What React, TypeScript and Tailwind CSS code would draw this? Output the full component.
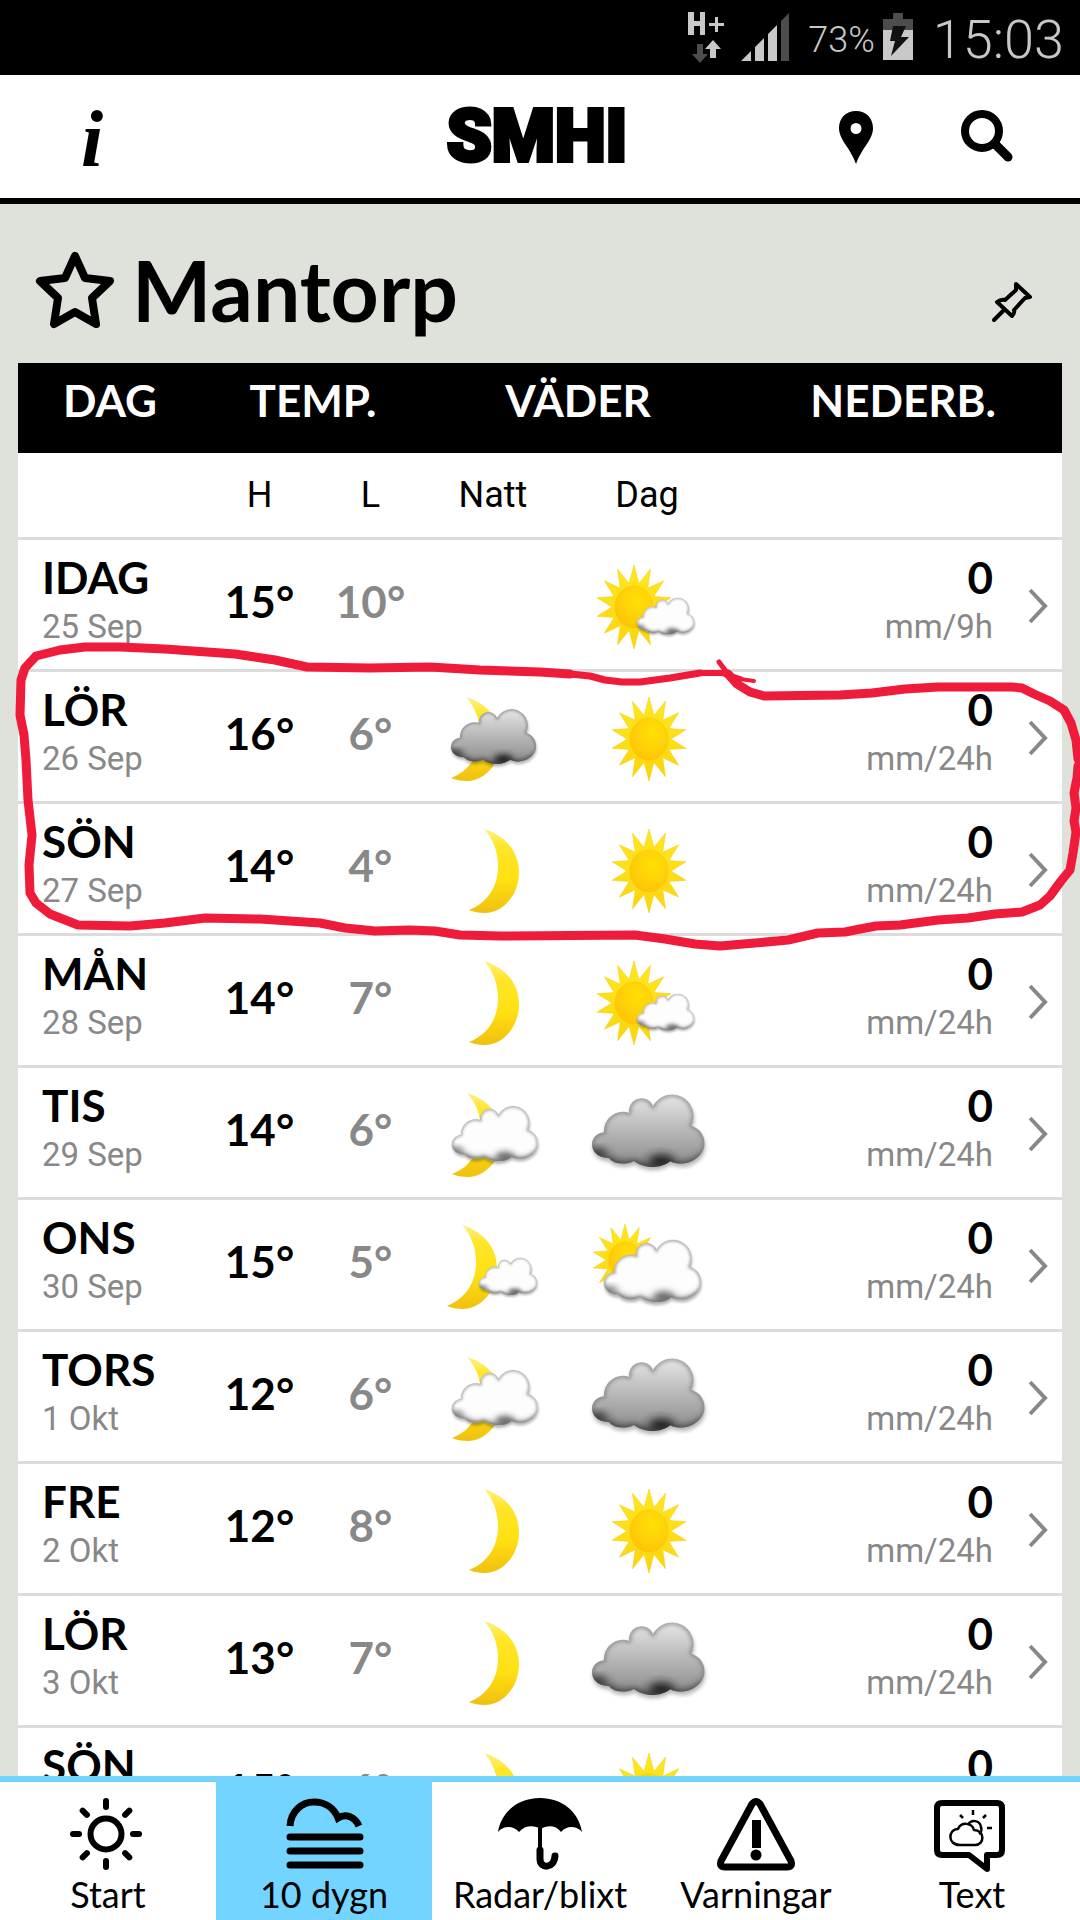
import React from "react";

type Symbol =
  | "none"
  | "sun"
  | "sunSmallCloud"
  | "sunCloud"
  | "overcast"
  | "moon"
  | "moonSmallCloud"
  | "moonCloud"
  | "moonOvercast";

interface Forecast {
  day: string;
  date: string;
  high: number;
  low: number;
  night: Symbol;
  daytime: Symbol;
  rain: number;
  hours: number;
}

const FORECAST: Forecast[] = [
  { day: "IDAG", date: "25 Sep", high: 15, low: 10, night: "none", daytime: "sunSmallCloud", rain: 0, hours: 9 },
  { day: "LÖR", date: "26 Sep", high: 16, low: 6, night: "moonOvercast", daytime: "sun", rain: 0, hours: 24 },
  { day: "SÖN", date: "27 Sep", high: 14, low: 4, night: "moon", daytime: "sun", rain: 0, hours: 24 },
  { day: "MÅN", date: "28 Sep", high: 14, low: 7, night: "moon", daytime: "sunSmallCloud", rain: 0, hours: 24 },
  { day: "TIS", date: "29 Sep", high: 14, low: 6, night: "moonCloud", daytime: "overcast", rain: 0, hours: 24 },
  { day: "ONS", date: "30 Sep", high: 15, low: 5, night: "moonSmallCloud", daytime: "sunCloud", rain: 0, hours: 24 },
  { day: "TORS", date: "1 Okt", high: 12, low: 6, night: "moonCloud", daytime: "overcast", rain: 0, hours: 24 },
  { day: "FRE", date: "2 Okt", high: 12, low: 8, night: "moon", daytime: "sun", rain: 0, hours: 24 },
  { day: "LÖR", date: "3 Okt", high: 13, low: 7, night: "moon", daytime: "overcast", rain: 0, hours: 24 },
  { day: "SÖN", date: "4 Okt", high: 15, low: 6, night: "moon", daytime: "sun", rain: 0, hours: 24 },
];

const CLOUD =
  "M36 106 A57 57 0 0 1 112 48 A37 37 0 0 1 183 28 A62 62 0 0 1 298 86 C325 95 338 115 338 140 C338 175 300 200 270 200 C255 200 244 197 235 193 C220 205 200 210 182 210 C160 210 140 203 126 192 C116 198 104 200 92 200 C74 200 60 194 50 183 C20 184 0 165 0 143 C0 122 16 108 36 106 Z";

// 14-pointed star, slightly taller than wide
const SUN_POINTS = Array.from({ length: 28 }, (_, i) => {
  const angle = (i * Math.PI) / 14;
  const rx = i % 2 === 0 ? 38 : 22;
  const ry = i % 2 === 0 ? 42 : 24;
  return `${(Math.sin(angle) * rx).toFixed(1)},${(-Math.cos(angle) * ry).toFixed(1)}`;
}).join(" ");

// Gradients and filters shared by every weather symbol
function SymbolDefs() {
  return (
    <svg className="absolute h-0 w-0" aria-hidden="true">
      <defs>
        <linearGradient id="ray" x1="0" y1="0" x2="0" y2="1">
          <stop offset="0" stopColor="#ffe81c" />
          <stop offset="1" stopColor="#fcd40c" />
        </linearGradient>
        <radialGradient id="disc" cx="0.6" cy="0.35" r="0.75">
          <stop offset="0" stopColor="#ffe000" />
          <stop offset="0.5" stopColor="#ffd20a" />
          <stop offset="1" stopColor="#ffc000" />
        </radialGradient>
        <linearGradient id="crescent" x1="0" y1="0" x2="0" y2="1">
          <stop offset="0" stopColor="#fff08a" />
          <stop offset="0.2" stopColor="#ffe62a" />
          <stop offset="0.6" stopColor="#ffe011" />
          <stop offset="1" stopColor="#f0c010" />
        </linearGradient>
        <linearGradient id="grayCloud" x1="0" y1="0" x2="0" y2="1">
          <stop offset="0" stopColor="#e6e6e6" />
          <stop offset="0.55" stopColor="#b2b2b2" />
          <stop offset="1" stopColor="#8c8c8c" />
        </linearGradient>
        <filter id="soft" x="-50%" y="-50%" width="200%" height="200%">
          <feGaussianBlur stdDeviation="13" />
        </filter>
        <filter id="rim" x="-20%" y="-20%" width="140%" height="140%">
          <feGaussianBlur stdDeviation="6" />
        </filter>
        <clipPath id="cloudClip">
          <path d={CLOUD} />
        </clipPath>
      </defs>
    </svg>
  );
}

function Cloud({ x, y, scale, gray = false }: { x: number; y: number; scale: number; gray?: boolean }) {
  return (
    <g transform={`translate(${x} ${y}) scale(${scale})`}>
      <path d={CLOUD} transform="translate(2 10)" fill="#000" opacity="0.3" filter="url(#rim)" />
      <path d={CLOUD} fill={gray ? "url(#grayCloud)" : "#fdfdfd"} />
      <g clipPath="url(#cloudClip)">
        <path d={CLOUD} fill="none" stroke={gray ? "#7a7a7a" : "#9c9c9c"} strokeWidth="9" filter="url(#rim)" />
        <path
          d="M-10 158 C20 186 40 180 60 184 C80 198 106 200 128 190 C150 206 215 208 236 192 C260 202 310 200 340 166 L340 240 L-10 240 Z"
          fill={gray ? "#3a3a3a" : "#666"}
          filter="url(#soft)"
        />
        <ellipse cx="208" cy="192" rx="38" ry="20" fill={gray ? "#222" : "#666"} filter="url(#soft)" />
        <ellipse cx="20" cy="168" rx="28" ry="14" fill={gray ? "#333" : "#777"} filter="url(#soft)" />
      </g>
      {!gray && <path d={CLOUD} fill="none" stroke="#9a9a9a" strokeWidth="3" opacity="0.35" />}
    </g>
  );
}

function Sun({ x, y, scale = 1 }: { x: number; y: number; scale?: number }) {
  return (
    <g transform={`translate(${x} ${y}) scale(${scale})`}>
      <polygon points={SUN_POINTS} fill="url(#ray)" stroke="#f7cf1a" strokeWidth="0.6" />
      <ellipse rx="19" ry="21" fill="url(#disc)" stroke="#f5c518" strokeWidth="0.6" />
    </g>
  );
}

function Moon({ x = 0 }: { x?: number }) {
  return (
    <path
      transform={`translate(${x} 0)`}
      d="M39 8 C62 15 74 32 74 51 C74 75 57 92 40 92 C34 92 28 91 24 89 C42 82 53 66 53 46 C53 30 48 18 39 8 Z"
      fill="url(#crescent)"
    />
  );
}

function NightSymbol({ symbol }: { symbol: Symbol }) {
  if (symbol === "none") return null;
  return (
    <svg viewBox="0 0 96 96" className="mx-auto h-24 w-24 overflow-visible" aria-hidden="true">
      {symbol === "moon" && <Moon />}
      {symbol === "moonOvercast" && (
        <>
          <Moon x={-18} />
          <Cloud x={6} y={22} scale={0.252} gray />
        </>
      )}
      {symbol === "moonCloud" && (
        <>
          <Moon x={-17} />
          <Cloud x={7} y={23} scale={0.254} />
        </>
      )}
      {symbol === "moonSmallCloud" && (
        <>
          <Moon x={-22} />
          <Cloud x={34} y={42} scale={0.172} />
        </>
      )}
    </svg>
  );
}

function DaySymbol({ symbol }: { symbol: Symbol }) {
  return (
    <svg viewBox="0 0 128 96" className="mx-auto h-24 w-32 overflow-visible" aria-hidden="true">
      {symbol === "sun" && <Sun x={66} y={50} />}
      {symbol === "sunSmallCloud" && (
        <>
          <Sun x={51} y={50} />
          <Cloud x={54} y={42} scale={0.17} />
        </>
      )}
      {symbol === "sunCloud" && (
        <>
          <Sun x={42} y={43} scale={0.86} />
          <Cloud x={21} y={25} scale={0.287} />
        </>
      )}
      {symbol === "overcast" && <Cloud x={9} y={12} scale={0.333} gray />}
    </svg>
  );
}

function StatusBar() {
  return (
    <div className="flex h-[75px] shrink-0 items-center justify-end bg-black pt-1 pr-4 font-['Roboto',sans-serif] text-[#c8c8c8]">
      <svg viewBox="0 0 106 56" className="mr-4 mb-1 h-14 w-[106px]" aria-hidden="true">
        <g fill="#c8c8c8">
          <path d="M2 2h6v9h6V2h5v23h-5v-9H8v9H2z" />
          <path d="M29 7h3v6h6v3h-6v6h-3v-6h-6v-3h6z" />
          <path d="M27 30l8 9h-5v9h-6v-9h-5z" />
          <path d="M55 51l10-10v10zM69 37l9-9v23h-9zM82 24l9-9v36h-9z" />
        </g>
        <path d="M11 34h6v10h5l-8 9-8-9h5z" fill="#4d4d4d" />
        <path d="M95 11l8-8v48h-8z" fill="#4d4d4d" />
      </svg>
      <span className="text-[36px] leading-[72px] font-light">73%</span>
      <svg viewBox="0 0 30 48" className="mx-2 mb-1.5 h-12 w-[30px]" aria-hidden="true">
        <path d="M10 0h10v6h10v11H0V6h10z" fill="#4d4d4d" />
        <path d="M0 17h30v30H0z" fill="#c8c8c8" />
        <path d="M10 13h13l-5 11h8L8 43l4-15H7z" fill="#111" />
      </svg>
      <span className="ml-3 text-[54px] leading-[72px] font-light">15:03</span>
    </div>
  );
}

function Toolbar() {
  return (
    <header className="flex h-[129px] shrink-0 items-center justify-between border-b-[6px] border-black bg-white px-[60px]">
      <div className="flex flex-1 pt-1">
        <button
          type="button"
          aria-label="Information"
          className="w-16 font-['Liberation_Serif',serif] text-[80px] leading-[96px] font-bold italic"
        >
          i
        </button>
      </div>
      <a
        href="#start"
        className="font-['Liberation_Sans_Narrow','Roboto',sans-serif] text-[72px] leading-[96px] font-black [-webkit-text-stroke:4px_black]"
      >
        SMHI
      </a>
      <div className="flex flex-1 justify-end gap-[84px] pt-0.5 pr-1.5">
        <button type="button" aria-label="Platser">
          <svg viewBox="0 0 36 56" className="h-14 w-9">
            <path
              d="M18 1C8 1 1 8 1 18c0 12 11 19 17 36 6-17 17-24 17-36C35 8 28 1 18 1zm0 12a5.500 5.500 0 1 1 0 11 5.500 5.500 0 0 1 0-11z"
              fill="#000"
            />
          </svg>
        </button>
        <button type="button" aria-label="Sök">
          <svg viewBox="0 0 56 56" className="h-14 w-14" fill="none" stroke="#000">
            <circle cx="24" cy="21" r="17" strokeWidth="8" />
            <path d="M37 34L50 47" strokeWidth="9" strokeLinecap="round" />
          </svg>
        </button>
      </div>
    </header>
  );
}

function PlaceTitle() {
  return (
    <div className="flex h-[159px] items-center pt-3 pr-3 pl-4">
      <button type="button" aria-label="Favorit">
        <svg viewBox="0 0 82 82" className="h-[82px] w-[82px]">
          <path
            d="M41 7L51 29L76 32L58 49L62 75L41 63L20 75L24 49L6 32L31 29Z"
            fill="none"
            stroke="#000"
            strokeWidth="8"
            strokeLinejoin="round"
          />
        </svg>
      </button>
      <h1 className="ml-4 text-[84px] leading-[100px] font-bold">Mantorp</h1>
      <button type="button" aria-label="Fäst plats" className="mt-7 ml-auto">
        <svg viewBox="0 0 80 70" className="h-[70px] w-20" fill="none" stroke="#000" strokeWidth="4">
          <path
            d="M46 15L60 28L55 29L44 41Q45 44 42 47L27 33Q31 30 35 31L46 21Z"
            strokeLinejoin="round"
          />
          <path d="M24 51L34 41" strokeWidth="4" strokeLinecap="round" />
        </svg>
      </button>
    </div>
  );
}

function ForecastTable() {
  return (
    <table className="w-full table-fixed border-separate border-spacing-0 bg-white">
      <colgroup>
        <col className="w-[184px]" />
        <col className="w-[115px]" />
        <col className="w-[107px]" />
        <col className="w-[138px]" />
        <col className="w-[170px]" />
        <col />
        <col className="w-[69px]" />
      </colgroup>
      <thead>
        <tr className="h-[90px] bg-black align-top text-[44px] leading-[48px] text-white [&>th]:pt-[13px] [&>th]:font-bold">
          <th>DAG</th>
          <th colSpan={2}>TEMP.</th>
          <th colSpan={2}>VÄDER</th>
          <th colSpan={2} className="pr-[66px] text-right">
            NEDERB.
          </th>
        </tr>
        <tr className="h-[87px] font-['Roboto',sans-serif] text-[36px] leading-[44px] [&>*]:border-b-[3px] [&>*]:border-[#dcdcdc] [&>th]:font-normal">
          <td />
          <th>H</th>
          <th>L</th>
          <th>Natt</th>
          <th>Dag</th>
          <td />
          <td />
        </tr>
      </thead>
      <tbody>
        {FORECAST.map((row) => (
          <tr key={row.date} className="h-[132px] [&>*]:border-b-[3px] [&>*]:border-[#dcdcdc]">
            <th scope="row" className="pt-[13px] pl-6 text-left align-top font-normal">
              <div className="text-[44px] leading-[48px] font-bold">{row.day}</div>
              <div className="font-['Roboto',sans-serif] text-[33px] leading-[52px] text-[#888]">{row.date}</div>
            </th>
            <td className="pb-2 text-center text-[44px] leading-[48px] font-bold">{row.high}°</td>
            <td className="pb-2 text-center text-[44px] leading-[48px] font-bold text-[#888]">{row.low}°</td>
            <td>
              <NightSymbol symbol={row.night} />
            </td>
            <td>
              <DaySymbol symbol={row.daytime} />
            </td>
            <td className="pt-[13px] text-right align-top">
              <div className="text-[44px] leading-[48px] font-bold">{row.rain}</div>
              <div className="font-['Roboto',sans-serif] text-[33px] leading-[52px] text-[#888]">mm/{row.hours}h</div>
            </td>
            <td>
              <a
                href={`#${row.date.replace(" ", "-")}`}
                aria-label={`Visa ${row.day} ${row.date}`}
                className="block pt-0.5 pl-9"
              >
                <svg viewBox="0 0 20 36" className="h-9 w-5">
                  <path d="M1 2L16 18L1 34" fill="none" stroke="#888" strokeWidth="4" />
                </svg>
              </a>
            </td>
          </tr>
        ))}
      </tbody>
    </table>
  );
}

// Hand-drawn marker ring round the weekend rows
function MarkerRing() {
  return (
    <svg
      viewBox="0 0 1080 1920"
      preserveAspectRatio="none"
      className="pointer-events-none absolute inset-0 h-full w-full"
      fill="none"
      stroke="#ee1b3b"
      strokeLinecap="round"
      strokeLinejoin="round"
      aria-hidden="true"
    >
      <path
        strokeWidth="9"
        d="M728 674 L737 684 L750 692 L764 696 L840 695 L872 693 L905 689 L938 687 L1012 687 L1022 688 L1034 694 L1050 701 L1064 710 L1071 723 L1076 740 L1078 759 M1078 766 L1077 778 L1074 793 L1076 808 L1074 821 L1076 832 L1073 853 L1070 870 L1061 881 L1050 896 L1040 905 L1022 912 L995 914 L968 918 L938 920 L900 925 L876 926 L860 929 L845 932 L818 933 L788 940 L755 943 L720 946 L695 944 L665 939 L635 935 L500 936 L460 935 L435 931 L410 930 L375 931 L345 928 L320 923 L260 919 L205 918 L165 923 L130 926 L78 925 L50 914 L36 903 L30 893 L29 865 L32 835 L28 800 L26 760 L24 735 L20 715 L21 680 L25 668 L36 656 L60 650 L85 647 L120 647 L165 649 L235 654 L275 660 L307 667 L370 668 L430 667 L480 670 L540 672 L570 674"
      />
      <path strokeWidth="7" d="M570 674 L590 676 L605 680 L622 682 L640 682 L670 678 L700 673" />
      <path strokeWidth="6" d="M700 673 L722 673 L740 679" />
      <path strokeWidth="4" d="M740 679 L754 681" />
      <path strokeWidth="5" d="M719 662 L728 674" />
    </svg>
  );
}

function StartIcon() {
  return (
    <svg viewBox="0 0 80 76" className="h-[76px] w-20" fill="none" stroke="#000" strokeWidth="6" strokeLinecap="round">
      <circle cx="38" cy="38" r="15.5" />
      {[0, 45, 90, 135, 180, 225, 270, 315].map((deg) => (
        <path key={deg} d="M38 5V11" transform={`rotate(${deg} 38 38)`} />
      ))}
    </svg>
  );
}

function TenDaysIcon() {
  return (
    <svg viewBox="0 0 80 76" className="h-[76px] w-20" fill="none" stroke="#000" strokeWidth="7">
      <path d="M6 30C7 15 18 6 30 6C41 6 50 12 54 22C62 17 71 21 75 30" />
      <path d="M6 41H76M6 55H76M6 69H76" strokeLinecap="round" />
    </svg>
  );
}

function UmbrellaIcon() {
  return (
    <svg viewBox="0 0 84 76" className="h-[76px] w-[84px]">
      <path
        d="M0 36C3 16 20 2 42 2C64 2 81 16 84 36C79 30 69 29 63 36C58 29 49 29 43 33C36 29 27 29 21 36C15 29 5 30 0 36Z"
        fill="#000"
      />
      <path d="M42 30V56" fill="none" stroke="#000" strokeWidth="4" />
      <path d="M42 54V63C42 73 56 73 57 60" fill="none" stroke="#000" strokeWidth="7" strokeLinecap="round" />
    </svg>
  );
}

function WarningIcon() {
  return (
    <svg viewBox="0 0 80 76" className="h-[76px] w-20">
      <path
        d="M36 8Q40 3 44 8L75 65Q77 71 71 71H9Q3 71 5 65Z"
        fill="none"
        stroke="#000"
        strokeWidth="7"
        strokeLinejoin="round"
      />
      <path d="M36 24H45V52H36Z" />
      <circle cx="40" cy="59" r="5.500" />
    </svg>
  );
}

function TextIcon() {
  return (
    <svg viewBox="0 0 80 76" className="h-[76px] w-20" fill="none" stroke="#000" strokeLinejoin="round">
      <path
        d="M10 7H65Q70 7 70 12V54Q70 59 65 59H55V73L37 59H10Q5 59 5 54V12Q5 7 10 7Z"
        strokeWidth="6"
      />
      <g strokeWidth="2.500">
        <path d="M28 49C15 49 16 33 26 33C29 26 40 26 42 34C53 34 53 49 43 49Z" />
        <path d="M36 29C39 23 48 24 49 31C50 34 49 37 47 38" />
        <path d="M41 14V19M28 19L31 22M54 19L51 22M55 32H60" />
      </g>
    </svg>
  );
}

const TABS = [
  { label: "Start", icon: StartIcon },
  { label: "10 dygn", icon: TenDaysIcon },
  { label: "Radar/blixt", icon: UmbrellaIcon },
  { label: "Varningar", icon: WarningIcon },
  { label: "Text", icon: TextIcon },
];

function TabBar() {
  return (
    <nav className="grid shrink-0 grid-cols-5 border-t-[6px] border-[#73d5ff] bg-white">
      {TABS.map(({ label, icon: Icon }) => {
        const isActive = label === "10 dygn";
        return (
          <button
            key={label}
            type="button"
            aria-current={isActive ? "page" : undefined}
            className={`flex flex-col items-center pt-3.5 pb-1 ${isActive ? "bg-[#73d5ff]" : "bg-white"}`}
          >
            <Icon />
            <span className="text-[36px] leading-[44px]">{label}</span>
          </button>
        );
      })}
    </nav>
  );
}

export default function App() {
  return (
    <div className="relative flex h-screen flex-col overflow-hidden bg-[#dfe2da] font-['Lato',sans-serif] text-black">
      <SymbolDefs />
      <StatusBar />
      <Toolbar />
      <main className="min-h-0 flex-1 overflow-y-auto px-[18px] [scrollbar-width:none]">
        <PlaceTitle />
        <ForecastTable />
      </main>
      <TabBar />
      <MarkerRing />
    </div>
  );
}
